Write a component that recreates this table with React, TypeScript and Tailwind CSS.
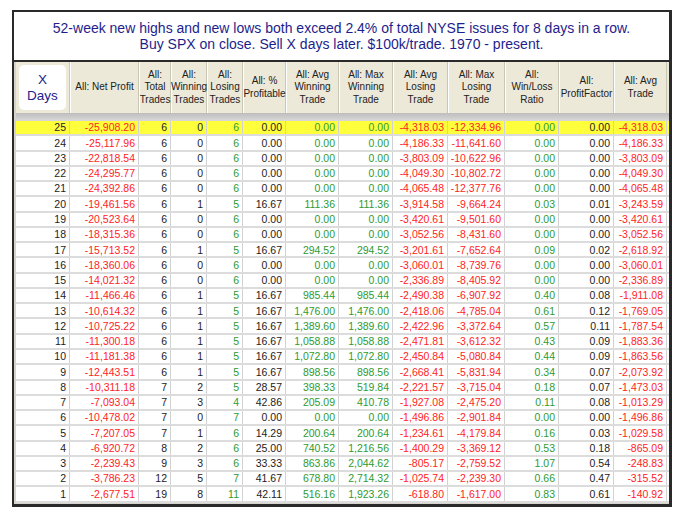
import React from "react";

type Row = string[];

// days, net, total, win, lose, pct, avgWin, maxWin, avgLoss, maxLoss, wl, pf, avg
const rows: Row[] = [
  ["25", "-25,908.20", "6", "0", "6", "0.00", "0.00", "0.00", "-4,318.03", "-12,334.96", "0.00", "0.00", "-4,318.03"],
  ["24", "-25,117.96", "6", "0", "6", "0.00", "0.00", "0.00", "-4,186.33", "-11,641.60", "0.00", "0.00", "-4,186.33"],
  ["23", "-22,818.54", "6", "0", "6", "0.00", "0.00", "0.00", "-3,803.09", "-10,622.96", "0.00", "0.00", "-3,803.09"],
  ["22", "-24,295.77", "6", "0", "6", "0.00", "0.00", "0.00", "-4,049.30", "-10,802.72", "0.00", "0.00", "-4,049.30"],
  ["21", "-24,392.86", "6", "0", "6", "0.00", "0.00", "0.00", "-4,065.48", "-12,377.76", "0.00", "0.00", "-4,065.48"],
  ["20", "-19,461.56", "6", "1", "5", "16.67", "111.36", "111.36", "-3,914.58", "-9,664.24", "0.03", "0.01", "-3,243.59"],
  ["19", "-20,523.64", "6", "0", "6", "0.00", "0.00", "0.00", "-3,420.61", "-9,501.60", "0.00", "0.00", "-3,420.61"],
  ["18", "-18,315.36", "6", "0", "6", "0.00", "0.00", "0.00", "-3,052.56", "-8,431.60", "0.00", "0.00", "-3,052.56"],
  ["17", "-15,713.52", "6", "1", "5", "16.67", "294.52", "294.52", "-3,201.61", "-7,652.64", "0.09", "0.02", "-2,618.92"],
  ["16", "-18,360.06", "6", "0", "6", "0.00", "0.00", "0.00", "-3,060.01", "-8,739.76", "0.00", "0.00", "-3,060.01"],
  ["15", "-14,021.32", "6", "0", "6", "0.00", "0.00", "0.00", "-2,336.89", "-8,405.92", "0.00", "0.00", "-2,336.89"],
  ["14", "-11,466.46", "6", "1", "5", "16.67", "985.44", "985.44", "-2,490.38", "-6,907.92", "0.40", "0.08", "-1,911.08"],
  ["13", "-10,614.32", "6", "1", "5", "16.67", "1,476.00", "1,476.00", "-2,418.06", "-4,785.04", "0.61", "0.12", "-1,769.05"],
  ["12", "-10,725.22", "6", "1", "5", "16.67", "1,389.60", "1,389.60", "-2,422.96", "-3,372.64", "0.57", "0.11", "-1,787.54"],
  ["11", "-11,300.18", "6", "1", "5", "16.67", "1,058.88", "1,058.88", "-2,471.81", "-3,612.32", "0.43", "0.09", "-1,883.36"],
  ["10", "-11,181.38", "6", "1", "5", "16.67", "1,072.80", "1,072.80", "-2,450.84", "-5,080.84", "0.44", "0.09", "-1,863.56"],
  ["9", "-12,443.51", "6", "1", "5", "16.67", "898.56", "898.56", "-2,668.41", "-5,831.94", "0.34", "0.07", "-2,073.92"],
  ["8", "-10,311.18", "7", "2", "5", "28.57", "398.33", "519.84", "-2,221.57", "-3,715.04", "0.18", "0.07", "-1,473.03"],
  ["7", "-7,093.04", "7", "3", "4", "42.86", "205.09", "410.78", "-1,927.08", "-2,475.20", "0.11", "0.08", "-1,013.29"],
  ["6", "-10,478.02", "7", "0", "7", "0.00", "0.00", "0.00", "-1,496.86", "-2,901.84", "0.00", "0.00", "-1,496.86"],
  ["5", "-7,207.05", "7", "1", "6", "14.29", "200.64", "200.64", "-1,234.61", "-4,179.84", "0.16", "0.03", "-1,029.58"],
  ["4", "-6,920.72", "8", "2", "6", "25.00", "740.52", "1,216.56", "-1,400.29", "-3,369.12", "0.53", "0.18", "-865.09"],
  ["3", "-2,239.43", "9", "3", "6", "33.33", "863.86", "2,044.62", "-805.17", "-2,759.52", "1.07", "0.54", "-248.83"],
  ["2", "-3,786.23", "12", "5", "7", "41.67", "678.80", "2,714.32", "-1,025.74", "-2,239.30", "0.66", "0.47", "-315.52"],
  ["1", "-2,677.51", "19", "8", "11", "42.11", "516.16", "1,923.26", "-618.80", "-1,617.00", "0.83", "0.61", "-140.92"],
];

const colColors = [
  "text-[#222222]",
  "text-[#ff2424]",
  "text-[#222222]",
  "text-[#222222]",
  "text-[#2f9a2f]",
  "text-[#222222]",
  "text-[#2f9a2f]",
  "text-[#2f9a2f]",
  "text-[#ff2424]",
  "text-[#ff2424]",
  "text-[#2f9a2f]",
  "text-[#222222]",
  "text-[#ff2424]",
];

const headers: string[][] = [
  ["All: Net Profit"],
  ["All:", "Total", "Trades"],
  ["All:", "Winning", "Trades"],
  ["All:", "Losing", "Trades"],
  ["All: %", "Profitable"],
  ["All: Avg", "Winning", "Trade"],
  ["All: Max", "Winning", "Trade"],
  ["All: Avg", "Losing", "Trade"],
  ["All: Max", "Losing", "Trade"],
  ["All:", "Win/Loss", "Ratio"],
  ["All:", "ProfitFactor"],
  ["All: Avg", "Trade"],
];

const gridCols =
  "grid grid-cols-[54px_69px_32px_36px_36px_43px_53px_54px_55px_57px_54px_55px_53px]";

export default function App() {
  return (
    <div className="w-[682px] h-[517px] bg-white pt-[10px] pl-[12px] font-['Liberation_Sans',Arial,sans-serif]">
      <div className="w-[660px] h-[497px] border-2 border-r-[3px] border-b-[3px] border-[#2a2a2a] flex flex-col">
        <div className="h-[48px] flex flex-col items-center justify-center text-[14px] leading-[16px] text-[#1e1e8c]">
          <p>52-week new highs and new lows both exceed 2.4% of total NYSE issues for 8 days in a row.</p>
          <p>Buy SPX on close. Sell X days later. $100k/trade. 1970 - present.</p>
        </div>
        <div className="h-[2px] bg-[#2a2a2a]" />
        <div className="flex-1 bg-[#d6d3cc] pl-[2px]">
          <div className={`${gridCols} h-[51px] bg-[#ece9d8]`}>
            <div className="p-[3px] border-r border-[#c9c6b6]">
              <div className="h-full bg-white rounded-[5px] flex flex-col items-center justify-center text-[13.5px] leading-[16px] text-[#22228b]">
                <span>X</span>
                <span>Days</span>
              </div>
            </div>
            {headers.map((h, i) => (
              <div
                key={i}
                className="flex flex-col items-center justify-center border-l border-l-white border-r border-r-[#c9c6b6] text-[10px] leading-[12.5px] text-[#222222] whitespace-nowrap"
              >
                {h.map((t) => (
                  <span key={t}>{t}</span>
                ))}
              </div>
            ))}
          </div>
          <div className="h-[8px] bg-gradient-to-b from-[#bdbdbd] to-[#d9d9d9]" />
          <div>
            {rows.map((r, ri) => (
              <div
                key={r[0]}
                className={`${gridCols} h-[15.28px] border-b-2 border-[#dcdcdc] ${
                  ri === 0 ? "bg-[#ffff3c]" : "bg-white"
                }`}
              >
                {r.map((v, ci) => (
                  <div
                    key={ci}
                    className={`flex items-center justify-end pr-[3px] text-[10.5px] leading-none border-r border-[#d2d2d2] ${colColors[ci]}`}
                  >
                    {v}
                  </div>
                ))}
              </div>
            ))}
          </div>
        </div>
      </div>
    </div>
  );
}
